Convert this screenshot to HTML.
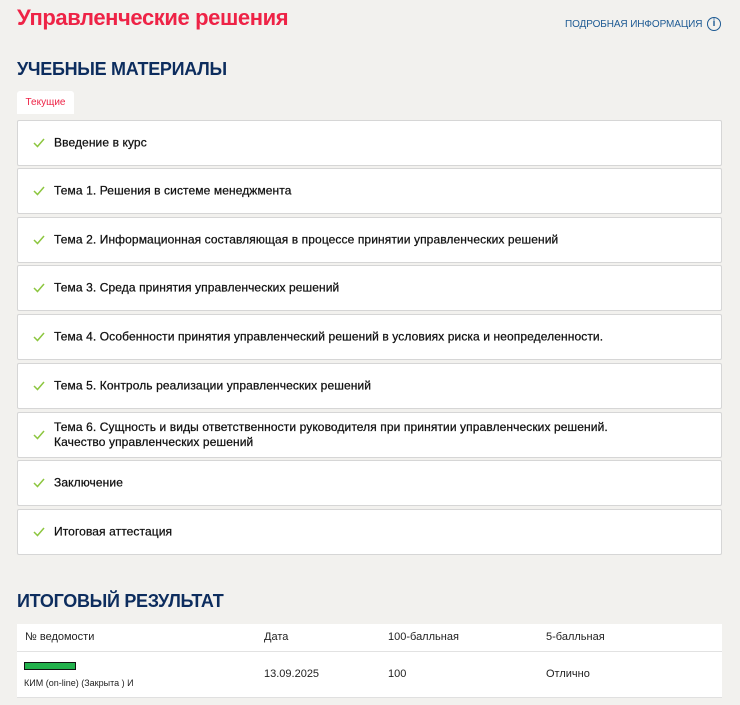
<!DOCTYPE html>
<html><head><meta charset="utf-8"><style>
body{margin:0;background:#f2f1ee;font-family:"Liberation Sans","Noto Sans CJK SC",sans-serif;width:740px;height:705px;overflow:hidden;position:relative}
.abs{position:absolute}
h1{position:absolute;left:17px;top:5px;margin:0;font-size:22px;color:#ee2346;font-weight:bold;letter-spacing:-0.4px}
.info{position:absolute;left:565px;top:19px;font-size:10px;color:#1d5a93;letter-spacing:-0.1px;white-space:nowrap}
.ic{position:absolute;left:707px;top:17px;width:12px;height:12px;border:1.6px solid #1d5a93;border-radius:50%;color:#1d5a93;font-size:10px;font-weight:bold;text-align:center;line-height:12px}
h2{position:absolute;left:17px;margin:0;font-size:18px;color:#0d2d5e;font-weight:bold;letter-spacing:-0.3px}
.tab{position:absolute;left:17px;top:91px;width:57px;height:23px;background:#fff;border-radius:3px 3px 0 0;color:#ee2346;font-size:10px;text-align:center;line-height:24px}
.row{position:absolute;left:17px;width:705px;background:#fff;border:1px solid #d6d6d6;border-radius:2px;font-size:12px;color:#111;box-sizing:border-box;-webkit-text-stroke:0.25px #111}
.row svg{position:absolute;left:15px;top:50%;margin-top:-5px}
.row span{position:absolute;left:36px;top:50%;transform:translateY(-50%);line-height:15px;letter-spacing:0.1px;white-space:nowrap}
.tbl{position:absolute;left:17px;width:705px;background:#fff;font-size:11px;color:#222}
</style></head><body>
<h1>Управленческие решения</h1>
<div class="info">ПОДРОБНАЯ ИНФОРМАЦИЯ</div><div class="ic">i</div>
<h2 style="top:59px">УЧЕБНЫЕ МАТЕРИАЛЫ</h2>
<div class="tab">Текущие</div>
<div class="row" style="top:120px;height:46px"><svg width="12" height="10"><path d="M1 5l3.5 3.5L11 1" stroke="#8cc63f" stroke-width="1.5" fill="none"/></svg><span>Введение в курс</span></div>
<div class="row" style="top:168px;height:46px"><svg width="12" height="10"><path d="M1 5l3.5 3.5L11 1" stroke="#8cc63f" stroke-width="1.5" fill="none"/></svg><span>Тема 1. Решения в системе менеджмента</span></div>
<div class="row" style="top:217px;height:46px"><svg width="12" height="10"><path d="M1 5l3.5 3.5L11 1" stroke="#8cc63f" stroke-width="1.5" fill="none"/></svg><span>Тема 2. Информационная составляющая в процессе принятии управленческих решений</span></div>
<div class="row" style="top:265px;height:46px"><svg width="12" height="10"><path d="M1 5l3.5 3.5L11 1" stroke="#8cc63f" stroke-width="1.5" fill="none"/></svg><span>Тема 3. Среда принятия управленческих решений</span></div>
<div class="row" style="top:314px;height:46px"><svg width="12" height="10"><path d="M1 5l3.5 3.5L11 1" stroke="#8cc63f" stroke-width="1.5" fill="none"/></svg><span>Тема 4. Особенности принятия управленческий решений в условиях риска и неопределенности.</span></div>
<div class="row" style="top:363px;height:46px"><svg width="12" height="10"><path d="M1 5l3.5 3.5L11 1" stroke="#8cc63f" stroke-width="1.5" fill="none"/></svg><span>Тема 5. Контроль реализации управленческих решений</span></div>
<div class="row" style="top:412px;height:46px"><svg width="12" height="10"><path d="M1 5l3.5 3.5L11 1" stroke="#8cc63f" stroke-width="1.5" fill="none"/></svg><span>Тема 6. Сущность и виды ответственности руководителя при принятии управленческих решений.<br>Качество управленческих решений</span></div>
<div class="row" style="top:460px;height:46px"><svg width="12" height="10"><path d="M1 5l3.5 3.5L11 1" stroke="#8cc63f" stroke-width="1.5" fill="none"/></svg><span>Заключение</span></div>
<div class="row" style="top:509px;height:46px"><svg width="12" height="10"><path d="M1 5l3.5 3.5L11 1" stroke="#8cc63f" stroke-width="1.5" fill="none"/></svg><span>Итоговая аттестация</span></div>
<h2 style="top:591px">ИТОГОВЫЙ РЕЗУЛЬТАТ</h2>
<div class="tbl" style="top:624px;height:27px;border-bottom:1px solid #e2e2e2">
<span class="abs" style="left:8px;top:7px">№ ведомости</span><span class="abs" style="left:247px;top:7px">Дата</span><span class="abs" style="left:371px;top:7px">100-балльная</span><span class="abs" style="left:529px;top:7px">5-балльная</span></div>
<div class="tbl" style="top:652px;height:45px;border-bottom:1px solid #e0e0e0">
<div class="abs" style="left:7px;top:10px;width:50px;height:6px;background:#22b14c;border:1px solid #111"></div>
<span class="abs" style="left:7px;top:26px;font-size:9px">КИМ (on-line) (Закрыта ) И</span>
<span class="abs" style="left:247px;top:16px">13.09.2025</span><span class="abs" style="left:371px;top:16px">100</span><span class="abs" style="left:529px;top:16px">Отлично</span></div>
</body></html>
